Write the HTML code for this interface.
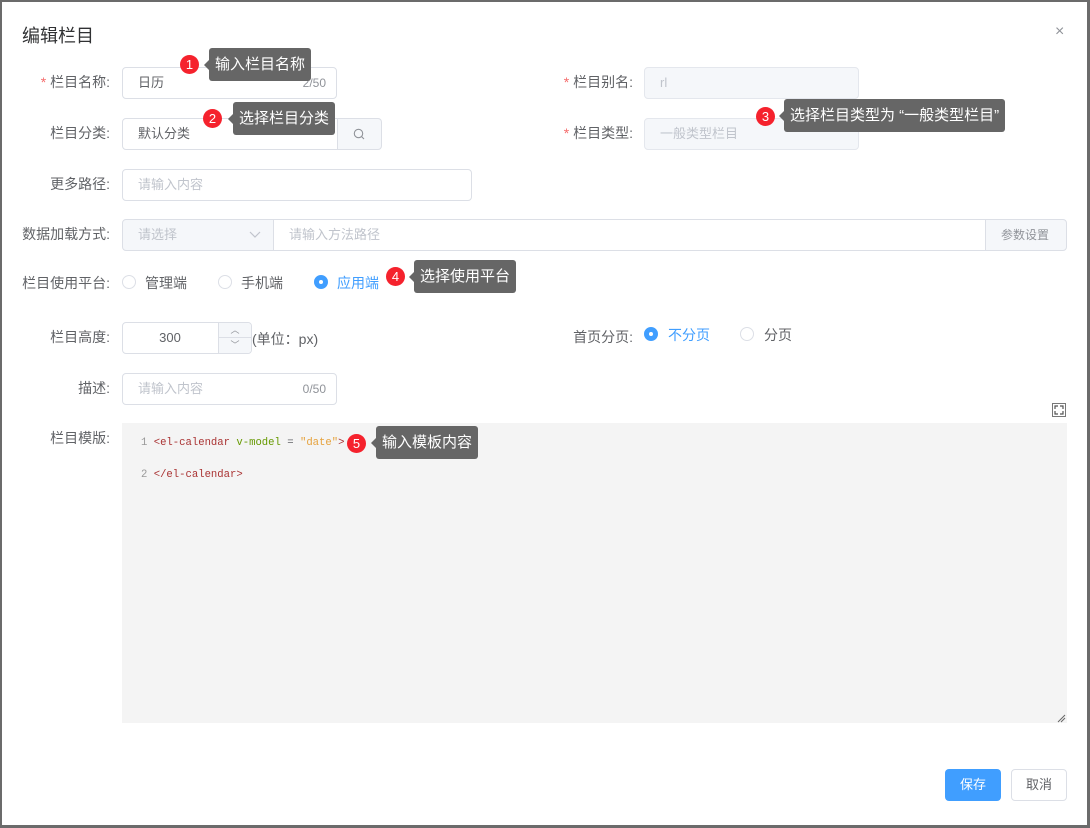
<!DOCTYPE html>
<html><head><meta charset="utf-8">
<style>
*{box-sizing:border-box;margin:0;padding:0}
body{width:1090px;height:828px;background:#6b6b6b;font-family:"Liberation Sans","Noto Sans CJK SC",sans-serif;font-size:14px;color:#606266;position:relative;overflow:hidden}
.dlg{position:absolute;left:2px;top:2px;width:1085px;height:823px;background:#fff}
.a{position:absolute}
.lbl{position:absolute;text-align:right;color:#606266;font-size:14px;line-height:32px}
.req:before{content:"* ";color:#f56c6c}
.inp{position:absolute;border:1px solid #dcdfe6;border-radius:4px;background:#fff;height:32px;line-height:30px;padding-left:15px;color:#606266;font-size:13px}
.dis{background:#f5f7fa;border-color:#e4e7ed;color:#c0c4cc}
.ph{color:#c0c4cc}
.cnt{position:absolute;right:10px;top:0;color:#909399;font-size:12px}
.tip{position:absolute;background:#666;color:#fff;font-size:15px;height:33px;line-height:33px;padding:0 6px;border-radius:3px}
.tip:before{content:"";position:absolute;left:-5px;top:12px;border:5px solid transparent;border-left:0;border-right-color:#666}
.bd{position:absolute;width:19px;height:19px;border-radius:50%;background:#f5222d;color:#fff;font-size:13px;line-height:19px;text-align:center}
.rad{position:absolute;width:14px;height:14px;border:1px solid #dcdfe6;border-radius:50%;background:#fff}
.rad.on{background:#409eff;border-color:#409eff}
.rad.on:after{content:"";position:absolute;left:4px;top:4px;width:4px;height:4px;border-radius:50%;background:#fff}
.rt{position:absolute;font-size:14px;color:#606266}
.code{font-family:"Liberation Mono",monospace;font-size:10.6px;position:absolute}
</style></head><body>
<div class="dlg"></div>
<div class="a" style="left:22px;top:22px;font-size:18px;color:#303133">编辑栏目</div>
<div class="a" style="left:1055px;top:23px;font-size:16px;color:#909399">×</div>

<div class="lbl req" style="left:0;width:110px;top:66px">栏目名称:</div>
<div class="inp" style="left:122px;top:67px;width:215px">日历<span class="cnt">2/50</span></div>
<div class="lbl req" style="left:500px;width:133px;top:66px">栏目别名:</div>
<div class="inp dis" style="left:644px;top:67px;width:215px">rl</div>

<div class="lbl" style="left:0;width:110px;top:117px">栏目分类:</div>
<div class="inp" style="left:122px;top:118px;width:216px;border-radius:4px 0 0 4px">默认分类</div>
<div class="inp" style="left:337px;top:118px;width:45px;background:#f5f7fa;border-radius:0 4px 4px 0;padding:0"><svg style="position:absolute;left:15px;top:9px" width="12" height="12" viewBox="0 0 12 12"><circle cx="5.5" cy="5.5" r="4.2" fill="none" stroke="#909399" stroke-width="1.1"/><path d="M8.5 8.5L11 11" stroke="#909399" stroke-width="1.1"/></svg></div>
<div class="lbl req" style="left:500px;width:133px;top:117px">栏目类型:</div>
<div class="inp dis" style="left:644px;top:118px;width:215px">一般类型栏目</div>

<div class="lbl" style="left:0;width:110px;top:168px">更多路径:</div>
<div class="inp ph" style="left:122px;top:169px;width:350px">请输入内容</div>

<div class="lbl" style="left:0;width:110px;top:218px">数据加载方式:</div>
<div class="inp dis" style="left:122px;top:219px;width:152px;border-radius:4px 0 0 4px;border-color:#dcdfe6">请选择<svg style="position:absolute;left:126px;top:11px" width="12" height="8" viewBox="0 0 12 8"><path d="M1 1l5 5 5-5" fill="none" stroke="#c0c4cc" stroke-width="1.2"/></svg></div>
<div class="inp ph" style="left:273px;top:219px;width:713px;border-radius:0">请输入方法路径</div>
<div class="inp" style="left:985px;top:219px;width:82px;background:#f5f7fa;border-radius:0 4px 4px 0;color:#909399;font-size:12px">参数设置</div>

<div class="lbl" style="left:0;width:110px;top:267px">栏目使用平台:</div>
<div class="rad" style="left:122px;top:275px"></div><div class="rt" style="left:145px;top:273px">管理端</div>
<div class="rad" style="left:218px;top:275px"></div><div class="rt" style="left:241px;top:273px">手机端</div>
<div class="rad on" style="left:314px;top:275px"></div><div class="rt" style="left:337px;top:273px;color:#409eff">应用端</div>

<div class="lbl" style="left:0;width:110px;top:321px">栏目高度:</div>
<div class="inp" style="left:122px;top:322px;width:130px;padding:0;text-align:center;padding-right:34px;color:#606266">300
<div class="a" style="right:0;top:0;width:33px;height:30px;border-left:1px solid #dcdfe6;background:#f5f7fa;border-radius:0 4px 4px 0"><div style="height:15px;border-bottom:1px solid #dcdfe6;font-size:9px;line-height:14px;color:#909399">︿</div><div style="font-size:9px;line-height:14px;color:#909399">﹀</div></div></div>
<div class="rt" style="left:252px;top:329px">(单位：px)</div>
<div class="lbl" style="left:500px;width:133px;top:321px">首页分页:</div>
<div class="rad on" style="left:644px;top:327px"></div><div class="rt" style="left:668px;top:325px;color:#409eff">不分页</div>
<div class="rad" style="left:740px;top:327px"></div><div class="rt" style="left:764px;top:325px">分页</div>

<div class="lbl" style="left:0;width:110px;top:372px">描述:</div>
<div class="inp ph" style="left:122px;top:373px;width:215px">请输入内容<span class="cnt">0/50</span></div>

<svg class="a" style="left:1052px;top:403px" width="14" height="14" viewBox="0 0 14 14"><rect x="0.5" y="0.5" width="13" height="13" fill="#fff" stroke="#777"/><path d="M3 6V3h3M8 3h3v3M11 8v3H8M6 11H3V8" fill="none" stroke="#555" stroke-width="1.2"/></svg>

<div class="lbl" style="left:0;width:110px;top:422px">栏目模版:</div>
<div class="a" style="left:122px;top:423px;width:945px;height:300px;background:#f4f4f4"></div>
<svg class="a" style="left:1056px;top:713px" width="10" height="10"><path d="M2 9L9 2M5 9L9 5" stroke="#666"/></svg>
<div class="code" style="left:141px;top:437px"><span style="color:#999">1 </span><span style="color:#a33">&lt;el-calendar </span><span style="color:#690">v-model</span> = <span style="color:#e6a23c">"date"</span><span style="color:#a33">&gt;</span></div>
<div class="code" style="left:141px;top:469px"><span style="color:#999">2 </span><span style="color:#a33">&lt;/el-calendar&gt;</span></div>

<div class="a" style="left:945px;top:769px;width:56px;height:32px;background:#409eff;border-radius:4px;color:#fff;text-align:center;line-height:32px;font-size:13px">保存</div>
<div class="a" style="left:1011px;top:769px;width:56px;height:32px;border:1px solid #dcdfe6;border-radius:4px;color:#606266;text-align:center;line-height:30px;font-size:13px">取消</div>

<div class="bd" style="left:180px;top:55px">1</div><div class="tip" style="left:209px;top:48px">输入栏目名称</div>
<div class="bd" style="left:203px;top:109px">2</div><div class="tip" style="left:233px;top:102px">选择栏目分类</div>
<div class="bd" style="left:756px;top:107px">3</div><div class="tip" style="left:784px;top:99px">选择栏目类型为 “一般类型栏目”</div>
<div class="bd" style="left:386px;top:267px">4</div><div class="tip" style="left:414px;top:260px">选择使用平台</div>
<div class="bd" style="left:347px;top:434px">5</div><div class="tip" style="left:376px;top:426px">输入模板内容</div>
</body></html>
